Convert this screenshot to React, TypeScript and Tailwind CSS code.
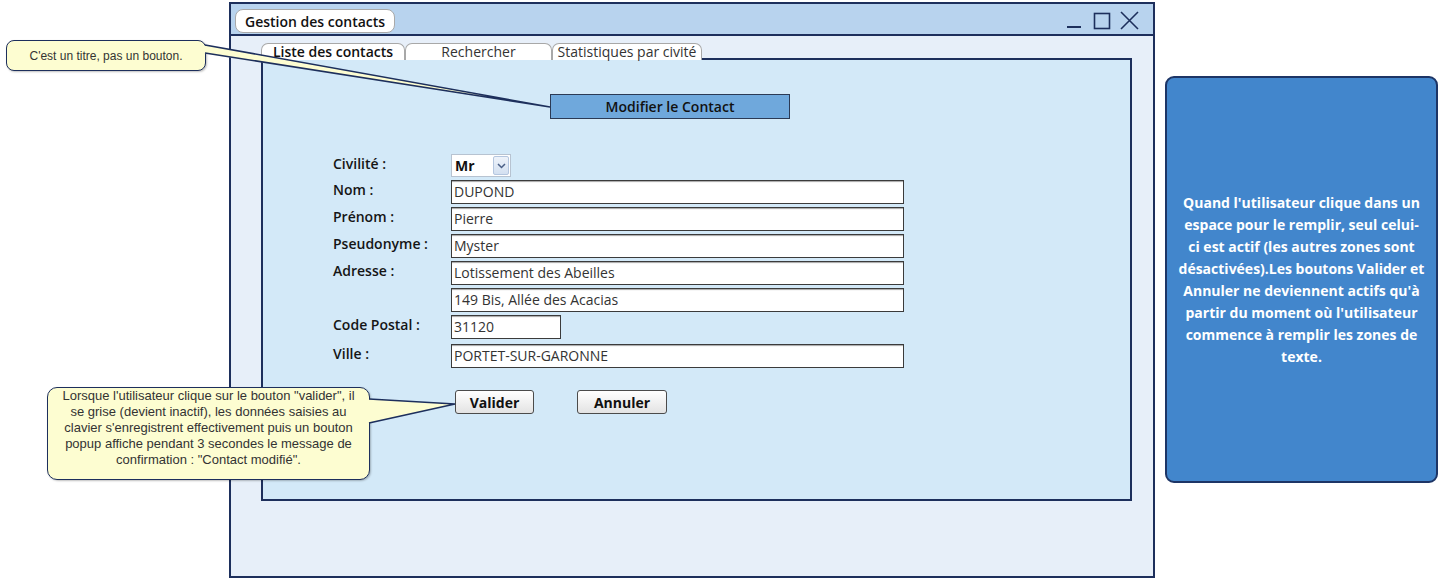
import React from 'react';

const ui = { fontFamily: '"Open Sans", Lato, sans-serif' };
const arial = { fontFamily: '"Liberation Sans", Arial, sans-serif' };

const Field = ({ value, width = 'w-[453px]' }: { value: string; width?: string }) => (
  <div
    className={`${width} h-[24px] bg-white border border-[#3b3b3b] shadow-[inset_0_2px_1px_-1px_rgba(0,0,0,0.35)] pl-[2px] text-[14px] leading-[22px] text-[#333]`}
  >
    {value}
  </div>
);

const Label = ({ children }: { children: React.ReactNode }) => (
  <div className="w-[118px] h-[20px] leading-[20px] text-[14px] font-semibold text-[#151515]">{children}</div>
);

const Tab = ({ label, active, width }: { label: string; active?: boolean; width: string }) => (
  <div
    className={`${width} h-[17px] bg-white border border-b-0 border-[#a8a8a8] rounded-t-[7px] flex items-center justify-center text-[14px] leading-none ${
      active ? 'font-semibold text-[#111]' : 'text-[#333]'
    }`}
  >
    {label}
  </div>
);

export default function App() {
  return (
    <div className="relative w-[1449px] h-[583px] bg-white overflow-hidden flex items-start" style={ui}>
      {/* Window */}
      <div className="ml-[229px] mt-[2px] w-[926px] h-[576px] border-2 border-[#1d2f5c] bg-[#e7eff9] flex flex-col">
        {/* Title bar */}
        <div className="h-[32px] bg-[#b8d3ee] border-b-2 border-[#1d2f5c] flex items-start justify-between">
          <div className="ml-[4px] mt-[5px] h-[24px] px-[9px] bg-white border border-[#a9a9a9] rounded-[8px] flex items-center text-[14px] font-semibold text-[#111]">
            Gestion des contacts
          </div>
          <svg width="80" height="30" viewBox="0 0 80 30" className="mr-[12px]">
            <line x1="6" y1="23" x2="20" y2="23" stroke="#1d2f5c" strokeWidth="2" />
            <rect x="33.5" y="9.5" width="15" height="15" fill="none" stroke="#1d2f5c" strokeWidth="1.6" />
            <path d="M60 8 L77 25 M77 8 L60 25" stroke="#1d2f5c" strokeWidth="1.6" />
          </svg>
        </div>

        {/* Body */}
        <div className="flex-1 pt-[7px] pl-[30px] pr-[21px]">
          <div className="flex items-end">
            <Tab label="Liste des contacts" active width="w-[144px]" />
            <Tab label="Rechercher" width="w-[147px]" />
            <Tab label="Statistiques par civité" width="w-[150px]" />
            <div className="flex-1 h-[2px] bg-[#1d2f5c]" />
          </div>

          <div className="h-[441px] bg-[#d3e9f8] border-2 border-t-0 border-[#1d2f5c] flex flex-col items-start pt-[34px]">
            <div className="ml-[287px] w-[240px] h-[25px] bg-[#6fa8dc] border border-[#2b3a55] flex items-center justify-center text-[14px] font-semibold text-[#111]">
              Modifier le Contact
            </div>

            <div className="pl-[70px] mt-[35px] flex flex-col">
              <div className="flex items-start h-[24px]">
                <Label>Civilité :</Label>
                <div className="w-[60px] h-[23px] bg-white border border-[#b7c3d1] flex items-center justify-between pl-[3px] pr-[1px]">
                  <span className="text-[14px] font-bold text-[#111]">Mr</span>
                  <div className="w-[16px] h-[19px] rounded-[2px] border border-[#b4c6df] bg-gradient-to-b from-[#eef3fa] to-[#d3e0f1] flex items-center justify-center">
                    <svg width="9" height="6" viewBox="0 0 9 6">
                      <path d="M1 1 L4.5 4.5 L8 1" fill="none" stroke="#4a5f86" strokeWidth="1.5" />
                    </svg>
                  </div>
                </div>
              </div>
              <div className="flex items-start mt-[2px]">
                <Label>Nom :</Label>
                <Field value="DUPOND" />
              </div>
              <div className="flex items-start mt-[3px]">
                <Label>Prénom :</Label>
                <Field value="Pierre" />
              </div>
              <div className="flex items-start mt-[3px]">
                <Label>Pseudonyme :</Label>
                <Field value="Myster" />
              </div>
              <div className="flex items-start mt-[3px]">
                <Label>Adresse :</Label>
                <div className="flex flex-col gap-[3px]">
                  <Field value="Lotissement des Abeilles" />
                  <Field value="149 Bis, Allée des Acacias" />
                </div>
              </div>
              <div className="flex items-start mt-[3px]">
                <Label>Code Postal :</Label>
                <Field value="31120" width="w-[110px]" />
              </div>
              <div className="flex items-start mt-[5px]">
                <Label>Ville :</Label>
                <Field value="PORTET-SUR-GARONNE" />
              </div>

              <div className="flex items-center mt-[22px] ml-[122px] gap-[43px]">
                <button className="w-[79px] h-[24px] rounded-[3px] border border-[#4b4b4b] bg-gradient-to-b from-white to-[#e3e3e3] text-[14px] font-bold text-[#111]">
                  Valider
                </button>
                <button className="w-[90px] h-[24px] rounded-[3px] border border-[#4b4b4b] bg-gradient-to-b from-white to-[#e3e3e3] text-[14px] font-bold text-[#111]">
                  Annuler
                </button>
              </div>
            </div>
          </div>
        </div>
      </div>

      {/* Note box on the right */}
      <div className="ml-[10px] mt-[76px] w-[273px] h-[407px] bg-[#4286cc] border-2 border-[#1d3566] rounded-[9px] flex items-center justify-center text-center text-white text-[14px] font-bold leading-[22px]">
        <p>
          Quand l'utilisateur clique dans un
          <br />
          espace pour le remplir, seul celui-
          <br />
          ci est actif (les autres zones sont
          <br />
          désactivées).Les boutons Valider et
          <br />
          Annuler ne deviennent actifs qu'à
          <br />
          partir du moment où l'utilisateur
          <br />
          commence à remplir les zones de
          <br />
          texte.
        </p>
      </div>

      {/* Callout: title */}
      <div
        className="absolute left-[6px] top-[40px] w-[200px] h-[31px] bg-[#fdfdd1] border-[1.5px] border-[#1d2f5c] rounded-[8px] shadow-[1px_1px_2px_rgba(0,0,0,0.25)] flex items-center justify-center text-[12px] text-[#333]"
        style={arial}
      >
        C'est un titre, pas un bouton.
      </div>

      {/* Callout: valider */}
      <div
        className="absolute left-[47px] top-[387px] w-[323px] h-[93px] bg-[#fdfdd1] border-[1.5px] border-[#1d2f5c] rounded-[10px] shadow-[1px_1px_2px_rgba(0,0,0,0.25)] text-center text-[13px] leading-[16px] text-[#333]"
        style={arial}
      >
        Lorsque l'utilisateur clique sur le bouton "valider", il
        <br />
        se grise (devient inactif), les données saisies au
        <br />
        clavier s'enregistrent effectivement puis un bouton
        <br />
        popup affiche pendant 3 secondes le message de
        <br />
        confirmation : "Contact modifié".
      </div>

      {/* Callout pointers */}
      <svg className="absolute left-0 top-0 pointer-events-none" width="1449" height="583">
        <polygon points="202,45 550,107 202,53" fill="#fdfdd1" />
        <polyline points="205,45 550,107 205,53" fill="none" stroke="#1d2f5c" strokeWidth="1.6" />
        <polygon points="367,399 455,404 367,423" fill="#fdfdd1" />
        <polyline points="369,399 455,404 369,423" fill="none" stroke="#1d2f5c" strokeWidth="1.6" />
      </svg>
    </div>
  );
}
